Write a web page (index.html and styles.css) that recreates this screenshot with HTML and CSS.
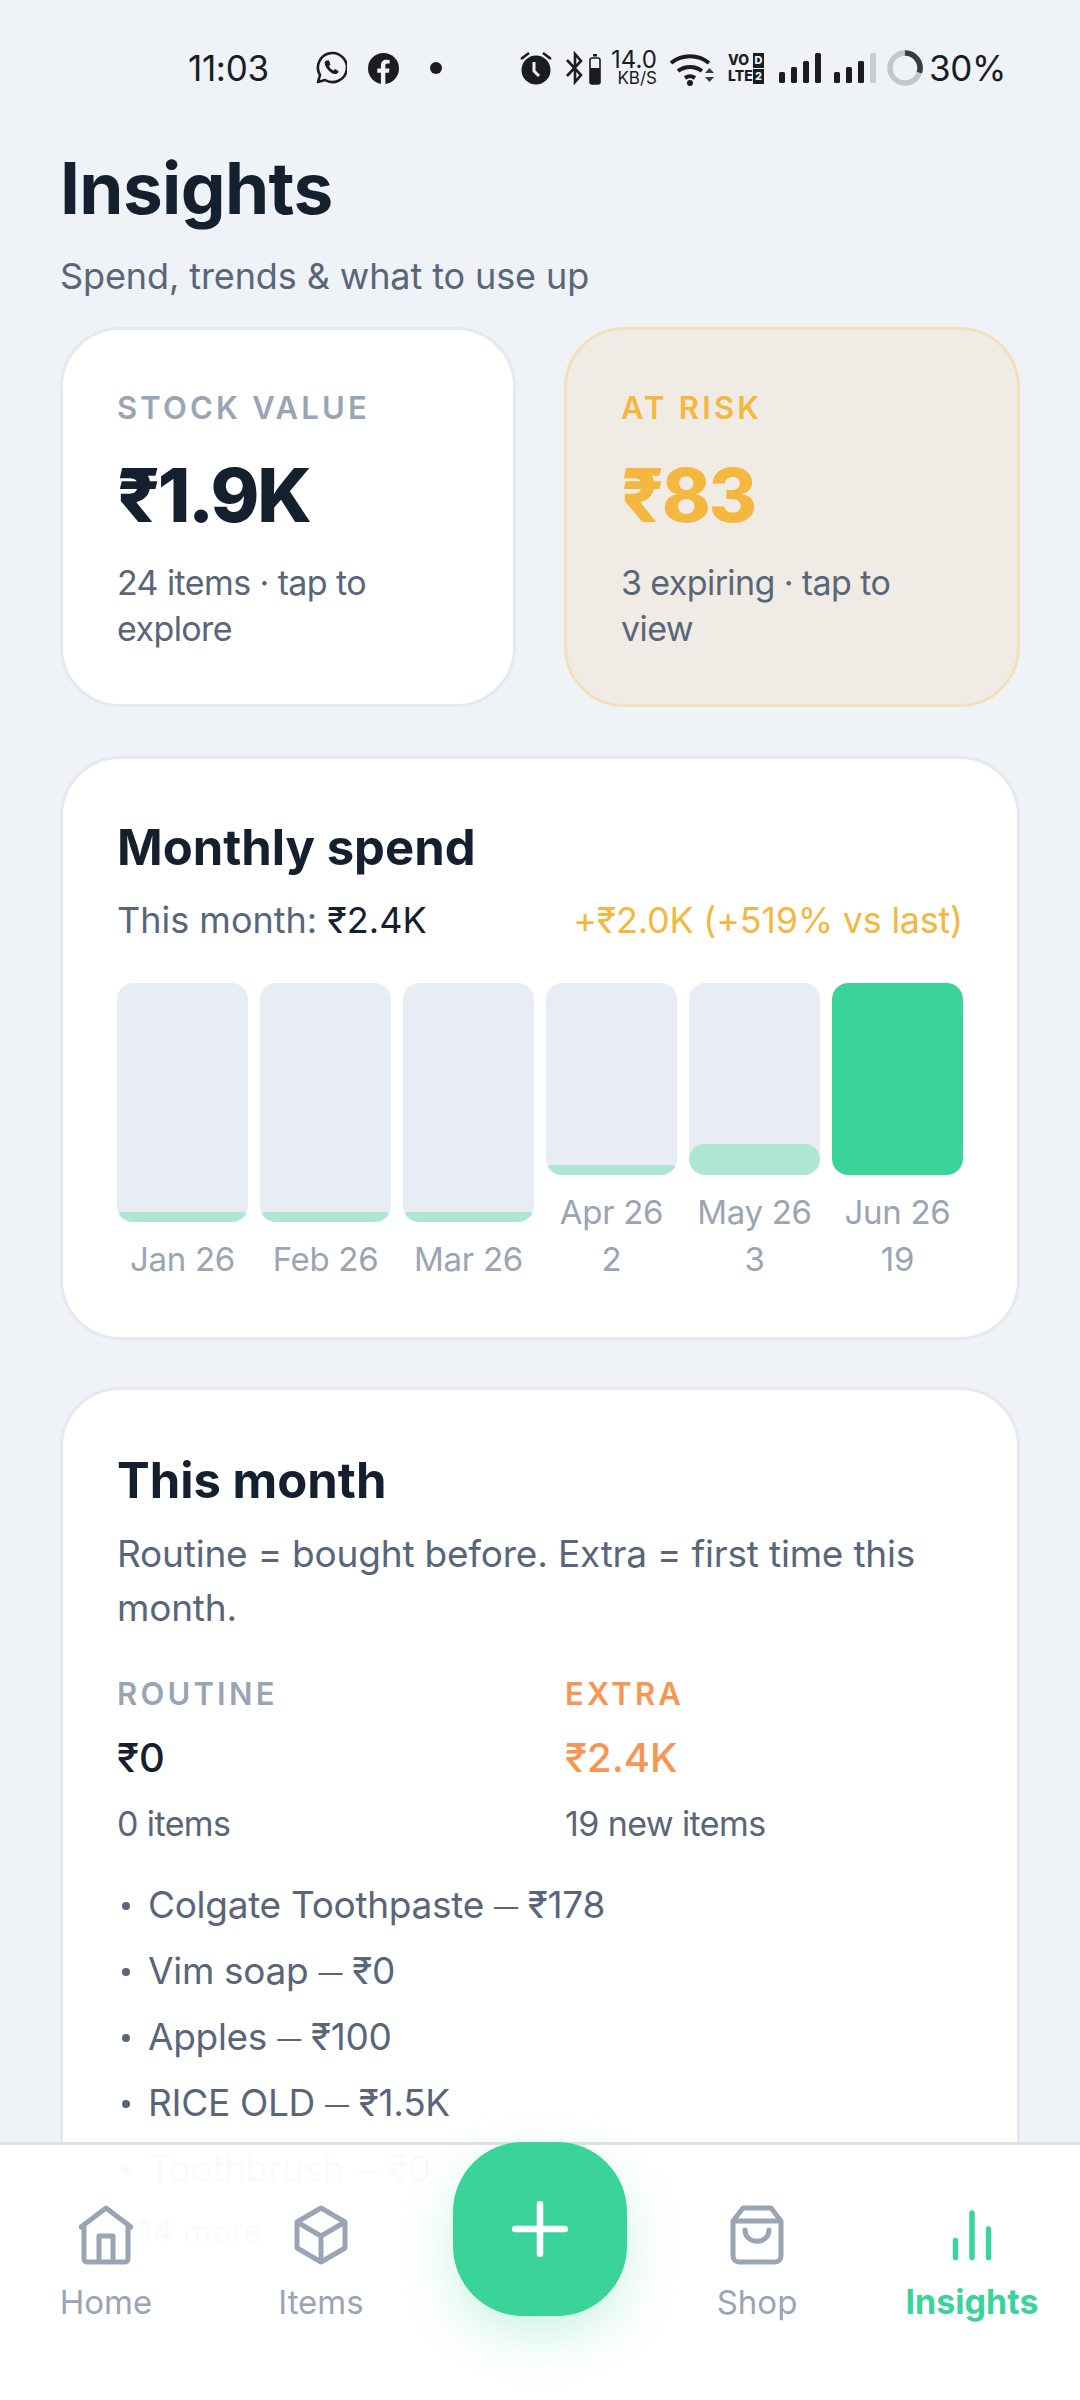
FILE: index.html
```html
<!DOCTYPE html>
<html lang="en">
<head>
    <meta charset="UTF-8">
    <meta name="viewport" content="width=device-width, initial-scale=1.0">
    <title>Insights</title>
    <link rel="stylesheet" href="styles.css">
</head>
<body>
    <div id="screen">
        <div class="status">
            <span class="time">11:03</span>
            <svg class="ic-wa" viewBox="0 0 32 34"><path d="M3 31l2-7A14.5 14.5 0 1 1 10 29z" fill="none" stroke="#1a1c1e" stroke-width="2.6" stroke-linejoin="round"/><path d="M11 9.500c-2 1.500-1.500 4.500 1 8s6 6 9 5.500c2-.5 2.500-2 2.500-3l-3.500-2-1.500 1.500c-2-.5-4-3-4.500-4.500l1.500-1.500-1.500-4z" fill="#1a1c1e"/></svg>
            <svg class="ic-fb" viewBox="0 0 30 30"><circle cx="15" cy="15" r="15" fill="#1a1c1e"/><path d="M12.500 30V19H9v-4h3.500v-3c0-3.600 2.200-5.500 5.300-5.500l3.200.2v3.500h-2c-1.700 0-2.200.9-2.200 2V15h4l-.6 4h-3.400v11z" fill="#eff2f7"/></svg>
            <span class="dot"></span>
            <svg class="ic-alarm" viewBox="0 0 32 34"><circle cx="16" cy="19" r="14.500" fill="#1a1c1e"/><path d="M1 8l8-6M31 8l-8-6" stroke="#1a1c1e" stroke-width="2.600"/><path d="M14 11v9l5 5" fill="none" stroke="#eff2f7" stroke-width="3"/></svg>
            <svg class="ic-bt" viewBox="0 0 36 34"><path d="M1 9l14 15-6 7V3l6 7L1 25" fill="none" stroke="#1a1c1e" stroke-width="2.600"/><rect x="24" y="7" width="10" height="26" rx="2" fill="none" stroke="#1a1c1e" stroke-width="1.600"/><rect x="24" y="17" width="10" height="16" rx="1" fill="#1a1c1e"/><rect x="27" y="3" width="4" height="2.500" fill="#1a1c1e"/></svg>
            <div class="speed"><b>14.0</b><i>KB/S</i></div>
            <svg class="ic-wifi" viewBox="0 0 46 36"><path d="M2 13a30 30 0 0 1 38 0M9 21a20 20 0 0 1 24 0M16 28a9 9 0 0 1 10 0" fill="none" stroke="#1a1c1e" stroke-width="4"/><circle cx="21" cy="33" r="3" fill="#1a1c1e"/><path d="M36 23l4.500-5 4.500 5zM36 27l4.500 5 4.500-5z" fill="#3a3d40"/></svg>
            <div class="volte">
                <div class="vo-row"><span>VO</span><em>D</em></div>
                <div class="vo-row"><span>LTE</span><em>2</em></div>
            </div>
            <div class="signal"><i class="s1"></i><i class="s2"></i><i class="s3"></i><i class="s4"></i></div>
            <div class="signal sig2"><i class="s1"></i><i class="s2"></i><i class="s3"></i><i class="s4 off"></i></div>
            <svg class="ic-ring" viewBox="0 0 36 36"><circle cx="18" cy="18" r="15" fill="none" stroke="#c3c7cc" stroke-width="5.500"/><path d="M18 3A15 15 0 0 1 32.300 22.600" fill="none" stroke="#3a3d40" stroke-width="5.500"/></svg>
            <span class="batt">30%</span>
        </div>

        <div class="page">
            <h1>Insights</h1>
            <p class="lead">Spend, trends &amp; what to use up</p>

            <div class="tiles">
                <div class="card tile">
                    <div class="cap">STOCK VALUE</div>
                    <div class="big">₹1.9K</div>
                    <div class="small">24 items · tap to explore</div>
                </div>
                <div class="card tile risk">
                    <div class="cap">AT RISK</div>
                    <div class="big">₹83</div>
                    <div class="small">3 expiring · tap to view</div>
                </div>
            </div>

            <div class="card block">
                <h2>Monthly spend</h2>
                <div class="spend-row">
                    <span>This month: <b>₹2.4K</b></span>
                    <span class="delta">+₹2.0K (+519% vs last)</span>
                </div>
                <div class="chart">
                    <div class="col">
                        <div class="bar"><div class="fill fill-thin"></div></div>
                        <div class="mon">Jan 26</div>
                    </div>
                    <div class="col">
                        <div class="bar"><div class="fill fill-thin"></div></div>
                        <div class="mon">Feb 26</div>
                    </div>
                    <div class="col">
                        <div class="bar"><div class="fill fill-thin"></div></div>
                        <div class="mon">Mar 26</div>
                    </div>
                    <div class="col">
                        <div class="bar"><div class="fill fill-thin"></div></div>
                        <div class="mon">Apr 26<br>2</div>
                    </div>
                    <div class="col">
                        <div class="bar"><div class="fill" style="height: 31px"></div></div>
                        <div class="mon">May 26<br>3</div>
                    </div>
                    <div class="col">
                        <div class="bar"><div class="fill now" style="height: 100%"></div></div>
                        <div class="mon">Jun 26<br>19</div>
                    </div>
                </div>
            </div>

            <div class="card block month">
                <h2>This month</h2>
                <p class="note">Routine = bought before. Extra = first time this month.</p>
                <div class="split">
                    <div>
                        <div class="cap">ROUTINE</div>
                        <div class="amt">₹0</div>
                        <div class="small">0 items</div>
                    </div>
                    <div class="extra">
                        <div class="cap">EXTRA</div>
                        <div class="amt">₹2.4K</div>
                        <div class="small">19 new items</div>
                    </div>
                </div>
                <ul class="list">
                    <li>Colgate Toothpaste <span class="dash">—</span> ₹178</li>
                    <li>Vim soap <span class="dash">—</span> ₹0</li>
                    <li>Apples <span class="dash">—</span> ₹100</li>
                    <li>RICE OLD <span class="dash">—</span> ₹1.5K</li>
                    <li>Toothbrush <span class="dash">—</span> ₹0</li>
                </ul>
                <div class="more">+14 more</div>
            </div>
        </div>

        <div class="nav">
            <div class="tab">
                <svg viewBox="0 0 54 60"><path d="M2 22L27 3l25 19M5 20v34a3 3 0 0 0 3 3h38a3 3 0 0 0 3-3V20M20 57V31h14v26" fill="none" stroke="#9aa5b4" stroke-width="5" stroke-linejoin="round" stroke-linecap="round"/></svg>
                <span>Home</span>
            </div>
            <div class="tab">
                <svg viewBox="0 0 54 60"><path d="M27 3l24 14v26L27 57 3 43V17zM3 17l24 14 24-14M27 31v26" fill="none" stroke="#9aa5b4" stroke-width="5" stroke-linejoin="round"/></svg>
                <span>Items</span>
            </div>
            <div class="fab-slot">
                <div class="fab"><svg viewBox="0 0 56 56"><path d="M28 3v50M3 28h50" stroke="#fff" stroke-width="6.500" stroke-linecap="round"/></svg></div>
            </div>
            <div class="tab">
                <svg viewBox="0 0 54 60"><path d="M13 3h28l10 13v35a6 6 0 0 1-6 6H9a6 6 0 0 1-6-6V16zM3 16h48" fill="none" stroke="#9aa5b4" stroke-width="5" stroke-linejoin="round"/><path d="M15 25c0 15 24 15 24 0" fill="none" stroke="#9aa5b4" stroke-width="5" stroke-linecap="round"/></svg>
                <span>Shop</span>
            </div>
            <div class="tab on">
                <svg viewBox="0 0 54 60"><path d="M10.500 52.500v-17M27 52.500V8M43.500 52.500V24" fill="none" stroke="#3ad39a" stroke-width="5.500" stroke-linecap="round"/></svg>
                <span>Insights</span>
            </div>
        </div>
    </div>
</body>
</html>
```
FILE: styles.css
```css
* {
    box-sizing: border-box;
}
html, body {
    margin: 0;
    padding: 0;
}
body {
    font-family: "Inter", "Noto Sans", sans-serif;
    color: #111f2e;
}
#screen {
    position: relative;
    width: 1080px;
    height: 2400px;
    overflow: hidden;
    background: #eff2f7;
}

/* status bar */
.status {
    display: flex;
    align-items: center;
    height: 136px;
    padding-left: 188px;
    color: #1a1c1e;
}
.time {
    width: 83px;
    font-size: 35px;
    letter-spacing: -0.3px;
}
.ic-wa { width: 32px; height: 34px; margin-left: 44px; }
.ic-fb { width: 31px; height: 31px; margin-left: 21px; }
.dot {
    width: 12px;
    height: 12px;
    margin-left: 31px;
    border-radius: 50%;
    background: #1a1c1e;
}
.ic-alarm { width: 32px; height: 34px; margin-left: 78px; }
.ic-bt { width: 36px; height: 34px; margin-left: 14px; }
.speed {
    display: flex;
    flex-direction: column;
    align-items: flex-end;
    width: 48px;
    margin-left: 7px;
    white-space: nowrap;
}
.speed b { font-size: 24px; font-weight: 400; line-height: 20px; }
.speed i { font-size: 17px; font-style: normal; line-height: 16px; }
.ic-wifi { width: 46px; height: 36px; margin-left: 12px; }
.volte {
    width: 36px;
    margin-left: 13px;
    font-size: 14px;
    font-weight: 800;
    line-height: 16px;
}
.vo-row {
    display: flex;
    justify-content: space-between;
    align-items: center;
}
.vo-row em {
    width: 11px;
    height: 15px;
    background: #1a1c1e;
    color: #eff2f7;
    font-size: 11px;
    font-style: normal;
    line-height: 15px;
    text-align: center;
}
.signal {
    display: flex;
    align-items: flex-end;
    gap: 6px;
    height: 30px;
    margin-left: 15px;
}
.sig2 { margin-left: 13px; }
.signal i {
    width: 6px;
    border-radius: 1.500px;
    background: #1a1c1e;
}
.signal .s1 { height: 11px; }
.signal .s2 { height: 16px; }
.signal .s3 { height: 22px; }
.signal .s4 { height: 30px; }
.signal .off { background: #c9cdd2; }
.ic-ring { width: 36px; height: 36px; margin-left: 11px; }
.batt {
    margin-left: 6px;
    font-size: 35px;
    letter-spacing: -0.3px;
}

/* page */
.page {
    padding: 12px 60px 0;
}
h1 {
    margin: 0;
    font-size: 71px;
    font-weight: 700;
    line-height: 80px;
    letter-spacing: -0.6px;
    color: #15202e;
}
.lead {
    margin: 26px 0 28px;
    font-size: 36px;
    line-height: 45px;
    letter-spacing: -0.1px;
    color: #59667a;
}
.card {
    background: #fff;
    border: 3px solid #e6e9ef;
    border-radius: 60px;
}
.tiles {
    display: grid;
    grid-template-columns: 1fr 1fr;
    gap: 48px;
}
.tile {
    height: 380px;
    padding: 58px 54px 0;
}
.cap {
    font-size: 31px;
    font-weight: 600;
    line-height: 40px;
    letter-spacing: 3.200px;
    color: #9aa5b4;
}
.big {
    margin-top: 22px;
    font-size: 74px;
    font-weight: 800;
    line-height: 90px;
    letter-spacing: -2.400px;
    color: #15202e;
}
.small {
    margin-top: 20px;
    font-size: 34px;
    line-height: 46px;
    letter-spacing: -0.6px;
    color: #59667a;
}
.risk {
    background: #f0ece5;
    border-color: #f3e0bc;
}
.risk .cap, .risk .big {
    color: #f4b740;
}

/* monthly */
.block {
    margin-top: 49px;
    padding: 59px 54px 0;
}
h2 {
    margin: 0;
    font-size: 49px;
    font-weight: 700;
    line-height: 60px;
    color: #15202e;
}
.spend-row {
    display: flex;
    justify-content: space-between;
    margin-top: 19px;
    font-size: 36px;
    line-height: 46px;
    color: #59667a;
}
.spend-row b {
    font-weight: 400;
    color: #15202e;
}
.delta {
    letter-spacing: -0.25px;
    color: #f4b740;
}
.chart {
    display: flex;
    gap: 12px;
    height: 300px;
    margin: 40px 0 54px;
}
.col {
    display: flex;
    flex-direction: column;
    flex: 1;
}
.bar {
    display: flex;
    flex: 1;
    flex-direction: column;
    justify-content: flex-end;
    overflow: hidden;
    border-radius: 16px;
    background: #e8edf5;
}
.fill {
    border-radius: 16px;
    background: #aee6d6;
}
.fill-thin {
    height: 10px;
}
.now {
    background: #3ad39a;
}
.mon {
    margin-top: 14px;
    font-size: 33px;
    line-height: 47px;
    letter-spacing: -0.3px;
    text-align: center;
    color: #9aa5b4;
}

/* this month */
.month {
    height: 1000px;
    margin-top: 47px;
    padding-top: 61px;
}
.note {
    margin: 16px 0 0;
    font-size: 37px;
    line-height: 54px;
    letter-spacing: -0.2px;
    color: #59667a;
}
.split {
    display: grid;
    grid-template-columns: 1fr 1fr;
    gap: 50px;
    margin-top: 39px;
}
.amt {
    margin-top: 19px;
    font-size: 40px;
    font-weight: 500;
    line-height: 50px;
    color: #15202e;
}
.split .small {
    margin-top: 18px;
}
.extra .cap, .extra .amt {
    color: #f79552;
}
.list {
    list-style: none;
    margin: 25px 0 0;
    padding: 0;
}
.list li {
    position: relative;
    height: 66px;
    padding-left: 31px;
    font-size: 37px;
    line-height: 66px;
    letter-spacing: -0.3px;
    color: #59667a;
}
.list li::before {
    content: "";
    position: absolute;
    left: 5px;
    top: 30px;
    width: 8px;
    height: 8px;
    border-radius: 50%;
    background: #59667a;
}
.dash {
    font-size: 24px;
    line-height: 0;
    vertical-align: 3px;
}
.more {
    font-size: 33px;
    line-height: 58px;
    color: #59667a;
}

/* bottom nav sits over the scrolling page */
.nav {
    position: absolute;
    left: 0;
    right: 0;
    bottom: 0;
    display: grid;
    grid-template-columns: 212px 218px 220px 214px 216px;
    height: 258px;
    border-top: 3px solid #dfe2e5;
    background: rgba(255, 255, 255, 0.97);
}
.tab {
    display: flex;
    flex-direction: column;
    align-items: center;
    padding-top: 60px;
    font-size: 33px;
    font-weight: 400;
    color: #9aa5b4;
}
.tab svg {
    width: 54px;
    height: 60px;
}
.tab span {
    margin-top: 15px;
    line-height: 44px;
}
.tab.on {
    font-size: 34px;
    font-weight: 700;
    color: #3ad39a;
}
.fab-slot {
    display: flex;
    justify-content: center;
}
.fab {
    display: flex;
    align-items: center;
    justify-content: center;
    width: 174px;
    height: 174px;
    margin-top: -3px;
    border-radius: 70px;
    background: #3ad39a;
    box-shadow: 0 20px 50px rgba(58, 211, 154, 0.25);
}
.fab svg {
    width: 56px;
    height: 56px;
}
```
